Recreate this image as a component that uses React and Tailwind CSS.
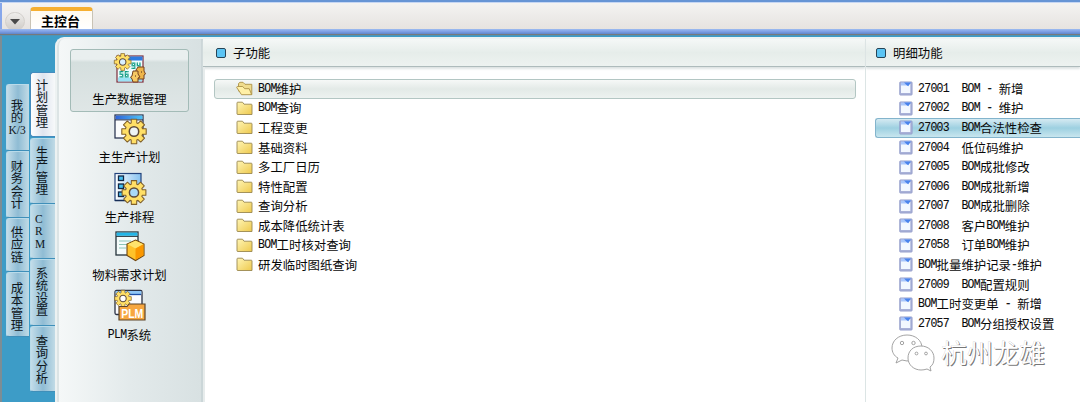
import React from "react";

const cjk = "font-['Noto_Sans_CJK_SC',sans-serif]";

function Label({ children }) {
  const parts = children.split(/([\x20-\x7e]+)/).filter(Boolean);
  return (
    <span className="flex items-center whitespace-pre text-[12.4px] leading-[18px] text-[#080808]">
      {parts.map((p, i) =>
        /^[\x20-\x7e]/.test(p) ? (
          <span key={i} className="inline-block scale-y-115 font-['Liberation_Mono',monospace] text-[11.5px] tracking-[-0.7px] [-webkit-text-stroke:0.1px_#222]">
            {p}
          </span>
        ) : (
          <span key={i}>{p}</span>
        )
      )}
    </span>
  );
}

const gearPoints = Array.from({ length: 8 }, (_, k) =>
  [[-0.32, 7.6], [-0.22, 10.6], [0.22, 10.6], [0.32, 7.6]].map(([d, r]) => {
    const a = (k * Math.PI) / 4 + d;
    return `${(r * Math.cos(a)).toFixed(2)},${(r * Math.sin(a)).toFixed(2)}`;
  }).join(" ")
).join(" ");

function Gear({ x, y, s = 1, hole = "#d8f0ff" }) {
  return (
    <g transform={`translate(${x} ${y}) scale(${s})`}>
      <polygon points={gearPoints} fill="#ffdf66" stroke="#80602a" strokeWidth=".9" strokeLinejoin="round" />
      <circle r="4" fill={hole} stroke="#5d4a3a" strokeWidth="1.3" />
    </g>
  );
}

function Pixels({ rows, x, y, u, fill }) {
  return (
    <g fill={fill}>
      {rows.map((r, j) => [...r].map((c, i) => c === "#" && <rect key={i + "-" + j} x={x + i * u} y={y + j * u} width={u} height={u} />))}
    </g>
  );
}

function ModuleIcon({ kind }) {
  return (
    <svg viewBox="0 0 34 32" className="h-8 w-[34px] shrink-0 overflow-visible">
      <defs>
        <linearGradient id="pane" x1="0" y1="0" x2="1" y2="0">
          <stop offset="0" stopColor="#fff" />
          <stop offset="1" stopColor="#86c2f0" />
        </linearGradient>
        <linearGradient id="title" x1="0" y1="0" x2="1" y2="0">
          <stop offset="0" stopColor="#2f63d8" />
          <stop offset="1" stopColor="#4cc4f8" />
        </linearGradient>
      </defs>
      {kind === "data" && (
        <g>
          <rect x="4" y="3" width="26" height="26" fill="#effdfd" stroke="#7d2e3c" strokeWidth="1.2" />
          <rect x="5" y="3.5" width="24.5" height="4" fill="#2e7be0" />
          <path d="M5 24.500h24v4H5z" fill="#9ce3f6" />
          <Pixels x={18.5} y={9.5} u={1.3} fill="#0a9a80" rows={["###.#.#", "#.#.#.#", "###.###", "..#...#", "###...#"]} />
          <Pixels x={6.5} y={18} u={1.3} fill="#0a9a80" rows={["###.###", "#...#..", "###.###", "..#.#.#", "###.###"]} />
          <Gear x={9.7} y={9} s={0.81} />
          <path d="M25 14h6v4l1.500 3-1.500 1v4h-6l-2-3v-6z" fill="#eeb54a" stroke="#73401f" />
          <path d="M20 18h5v3l2 3-2 1v4h-5l-1-3-1.500-2 1.500-1z" fill="#f6c862" stroke="#73401f" />
          <path d="M28 19h1M22 23h1" stroke="#4b2a18" />
        </g>
      )}
      {kind === "plan" && (
        <g>
          <rect x="2" y="2" width="28" height="23" fill="#fbfcfc" stroke="#202b48" strokeWidth="1.2" />
          <rect x="2.6" y="2.6" width="26.8" height="3.8" fill="url(#title)" />
          <path d="M2 6.900h28" stroke="#202b48" />
          <Gear x={21} y={18.5} s={1.18} hole="#eef4f6" />
        </g>
      )}
      {kind === "schedule" && (
        <g>
          <rect x="2" y="1.500" width="26" height="27" fill="url(#pane)" stroke="#23437c" strokeWidth="1.2" />
          {[4, 12, 20].map((y) => (
            <rect key={y} x="5.500" y={y} width="5" height="4.500" fill="#48c1f3" stroke="#122746" strokeWidth="1.3" />
          ))}
          <path d="M2 28.500h27" stroke="#182f57" strokeWidth="1.4" />
          <Gear x={21} y={20.500} s={1.15} hole="#a9d9f7" />
        </g>
      )}
      {kind === "material" && (
        <g>
          <rect x="3" y="2" width="22" height="23" fill="#f4fbfa" stroke="#26343c" strokeWidth="1.3" />
          <rect x="3.600" y="2.600" width="20.800" height="3.200" fill="#22b6e8" />
          <path d="M3 6.400h22" stroke="#26343c" />
          <path d="M6 11h12M6 14.500h8M6 18h7" stroke="#8cc5b7" strokeWidth="1.2" />
          <path d="M22.500 10l8.500 4v11.500l-8.500 5-8.500-5V14z" fill="#ffc22a" stroke="#714710" strokeWidth="1.1" />
          <path d="M22.500 10.700l7.800 3.500-7.800 4.300-7.800-4.300z" fill="#ffe46c" />
          <path d="M22.500 18.500l7.900-4.200v11l-7.900 4.500z" fill="#fb9700" />
        </g>
      )}
      {kind === "plm" && (
        <g>
          <rect x="2" y="1.500" width="27" height="24" rx="1.500" fill="#fbfcff" stroke="#2a3144" strokeWidth="1.3" />
          <rect x="2.600" y="2" width="25.800" height="3" fill="#8fc6f6" />
          <path d="M3 5.500h25" stroke="#1b4fa8" strokeWidth="1.3" />
          <Gear x={10} y={9.500} s={0.8} hole="#fff" />
          <path d="M6 17.500v13.500h26V15H16l-2 2.500z" fill="#f7a740" stroke="#5d4529" strokeWidth="1.2" />
          <text x="19.200" y="28.500" textAnchor="middle" textLength="22" lengthAdjust="spacingAndGlyphs" className="fill-white font-['Liberation_Sans',sans-serif] text-[12px] font-bold">PLM</text>
        </g>
      )}
    </svg>
  );
}

function FolderIcon({ open }) {
  return (
    <svg viewBox="0 0 17 15" className="h-[15px] w-[17px] shrink-0">
      <defs>
        <linearGradient id="folder" x1="0" y1="0" x2="1" y2="1">
          <stop offset="0" stopColor="#fff5b5" />
          <stop offset="1" stopColor="#eec94d" />
        </linearGradient>
      </defs>
      {open ? (
        <g stroke="#ac9146" strokeWidth=".9" strokeLinejoin="round">
          <path d="M2.500 10V2.500l1.500-1.200h3l2 2h6.800V13.500z" fill="#f0dc8d" />
          <path d="M.7 6.500q0-1 1-1h5l2 2.200h4.500l2.500 6H5.500z" fill="#fff0a6" />
        </g>
      ) : (
        <path d="M1 13V2q0-.8.8-.8h4.700l1.500 2h7.300q.7 0 .7.800V13.500H2q-1 0-1-.5z" fill="url(#folder)" stroke="#9a8850" strokeWidth=".9" />
      )}
    </svg>
  );
}

function DocIcon() {
  return (
    <svg viewBox="0 0 14 15" className="h-[15px] w-[14px] shrink-0">
      <rect x=".7" y=".9" width="12.400" height="13.200" rx=".8" fill="#a9b1d8" stroke="#8f99c8" strokeWidth=".8" />
      <path d="M2 3h9.300v9H2z" fill="#f3f8ff" />
      <path d="M2 1.500h10L9 4.500H2z" fill="#a9c6fb" />
      <path d="M5 1.500H12L9.200 5.300 7.500 4z" fill="#4a83ec" />
    </svg>
  );
}

function SideTab({ text, className, active }) {
  return (
    <div
      className={
        "flex shrink-0 flex-col items-center rounded-l-[3px] border border-r-0 text-[12.4px] leading-[12.4px] text-[#10171c] " +
        (active
          ? "border-[#468bbe] bg-linear-to-r from-white via-[#dfe4ef] to-[#f7f9fa] "
          : "border-[#b9dbea] border-b-[#3f8fb9] bg-linear-to-r from-[#c3dde9] via-[#8fbcd4] to-[#c1dbe6] ") +
        className
      }
    >
      {text.map((t, i) => (
        <span key={i} className={/[A-Z]/.test(t) ? "font-['Liberation_Serif',serif] text-[11.5px] whitespace-nowrap" : "whitespace-nowrap"}>{t}</span>
      ))}
    </div>
  );
}

const modules = [
  ["data", "生产数据管理", "mt-[6px]"],
  ["plan", "主生产计划", "mt-[3px]"],
  ["schedule", "生产排程", "mt-[4px]"],
  ["material", "物料需求计划", "mt-[4px]"],
  ["plm", "PLM系统", "mt-[5px]"],
];

const folders = ["BOM维护", "BOM查询", "工程变更", "基础资料", "多工厂日历", "特性配置", "查询分析", "成本降低统计表", "BOM工时核对查询", "研发临时图纸查询"];

const details = [
  "27001  BOM - 新增", "27002  BOM - 维护", "27003  BOM合法性检查", "27004  低位码维护", "27005  BOM成批修改",
  "27006  BOM成批新增", "27007  BOM成批删除", "27008  客户BOM维护", "27058  订单BOM维护", "BOM批量维护记录-维护",
  "27009  BOM配置规则", "BOM工时变更单 - 新增", "27057  BOM分组授权设置",
];

function SectionHeader({ title, className }) {
  return (
    <div className={"flex h-[28px] shrink-0 items-center border-b border-[#aebbbc] bg-linear-to-b from-[#f5f8f7] via-[#e6edea] to-[#edf2f0] pt-px shadow-[0_2px_2px_#dde3e3] " + className}>
      <span className="mr-[7px] h-[10px] w-[10px] rounded-[2px] border-[1.5px] border-[#274557] bg-[#5cc5f4]" />
      <Label>{title}</Label>
    </div>
  );
}

export default function App() {
  return (
    <div className={"flex h-[402px] w-[1080px] flex-col overflow-hidden bg-[#3d9cc7] " + cjk}>
      <div className="h-[3px] shrink-0 border-b border-[#c6d6f3] bg-[#6694d5]" />
      <div className="flex h-[26px] shrink-0 border-l-2 border-[#86a7eb] bg-linear-to-b from-[#f4f3f2] to-[#e6e3e0]">
        <div className="mt-[9px] ml-[3px] flex h-[19px] w-[20px] items-center justify-center rounded-full border border-[#d3d0cc] bg-linear-to-b from-[#efeeec] to-[#cfccc8]">
          <svg viewBox="0 0 10 6" className="h-[6px] w-[10px]"><path d="M0 0h10L5 5.500z" fill="#494949" /></svg>
        </div>
        <div className="mt-1 ml-[5px] flex h-[22px] w-[63px] items-center justify-center rounded-t-[4px] border border-t-[4px] border-b-0 border-[#c9c3b5] border-t-[#f6af31] bg-linear-to-b from-[#fffaf0] to-white pr-[2px] text-[13px] font-bold text-black">
          <span className="leading-[17px]">主控台</span>
        </div>
      </div>
      <div className="h-[5px] shrink-0 bg-linear-to-b from-[#9dbcf0] via-[#7f9fe4] to-[#5f86cb]" />
      <div className="h-[2px] shrink-0 border-b border-[#4c94b8] bg-[#77797b]" />
      <div className="flex min-h-0 flex-1 border-l-2 border-[#7c8d95]">
        <div className="ml-1 flex w-[23px] flex-col pt-12">
          <SideTab text={["我", "的", "K/3"]} className="h-[67px] pt-[14px] pr-[2px]" />
          <SideTab text={[..."财务会计"]} className="h-[67px] pt-[8px] pr-[2px]" />
          <SideTab text={[..."供应链"]} className="h-[54px] pt-[7px] pr-[2px]" />
          <SideTab text={[..."成本管理"]} className="h-[65px] pt-[9px] pr-[2px]" />
        </div>
        <div className="ml-px flex w-[25px] flex-col pt-9">
          <SideTab active text={[..."计划管理"]} className="h-[65px] pt-[6px] pr-[2px]" />
          <SideTab text={[..."生产管理"]} className="mt-px h-[66px] pt-[7px] pr-[2px]" />
          <SideTab text={[..."CRM"]} className="h-[55px] items-start! pt-[8px] pl-[4px]" />
          <SideTab text={[..."系统设置"]} className="h-[67px] pt-[7px] pr-[2px]" />
          <SideTab text={[..."查询分析"]} className="h-[66px] pt-[8px] pr-[2px]" />
        </div>
        <div className="mt-px flex min-w-0 flex-1 rounded-tl-[9px] border-t-2 border-l-2 border-[#edf2f2] bg-white">
          <div className="flex w-[144px] shrink-0 flex-col items-center rounded-tl-[7px] border-l-2 border-[#dce4e5] bg-linear-to-r from-[#f5f8f8] via-[#e3eaeb] to-[#d8e1e2] pt-[10px] pr-px">
            {modules.map(([kind, name, gap], i) => (
              <div
                key={kind}
                className={
                  "flex w-[119px] shrink-0 flex-col items-center " +
                  (i === 0
                    ? "mb-px h-[63px] rounded-[3px] border border-[#a3bbb7] bg-linear-to-b from-[#e9efef] from-15% via-[#d5dfde] via-20% to-[#dfe6e6] pt-[3px]"
                    : "h-[58.5px]")
                }
              >
                <ModuleIcon kind={kind} />
                <div className={i === 0 ? "mt-[5px]" : gap}><Label>{name}</Label></div>
              </div>
            ))}
          </div>
          <div className="flex w-[664px] shrink-0 flex-col border-l-2 border-[#cbd6d8]">
            <SectionHeader title="子功能" className="pl-[13px]" />
            <div className="flex flex-1 flex-col border-l-2 border-[#e7ecec] pt-[12px] pl-[9px]">
              {folders.map((f, i) => (
                <div key={f} className={"flex h-[19.58px] w-[642px] shrink-0 items-center gap-[5px] pl-[21px] " + (i === 0 ? "rounded-[3px] border border-[#b3c6c3] bg-linear-to-b from-[#f6f8f7] via-[#e3eae7] to-[#edf2f0]" : "border border-transparent")}>
                  <FolderIcon open={i === 0} />
                  <Label>{f}</Label>
                </div>
              ))}
            </div>
          </div>
          <div className="flex min-w-0 flex-1 flex-col border-l border-[#dce5e5]">
            <SectionHeader title="明细功能" className="pl-[10px]" />
            <div className="flex flex-col pt-[12px] pl-[9px]">
              {details.map((d, i) => (
                <div key={d} className={"flex h-[19.58px] items-center gap-[5px] rounded-l-[3px] border border-r-0 pl-[23px] " + (i === 2 ? "border-[#83b4cc] bg-linear-to-b from-[#d5eaf2] via-[#9dd0e1] to-[#c8e6ee]" : "border-transparent")}>
                  <DocIcon />
                  <Label>{d}</Label>
                </div>
              ))}
            </div>
            <div className="ml-[25px] flex items-center gap-[6px]">
              <svg viewBox="0 0 44 38" className="h-[38px] w-[44px]" fill="#fff" stroke="#999" strokeWidth=".9">
                <path d="M16 1C7 1 1 7 1 14c0 4 2 8 6 10l-2 5 6-3q5 2 10 0C27 25 31 20 31 14 31 6 24 1 16 1z" />
                <circle cx="11" cy="9" r="1.700" /><circle cx="22.500" cy="9" r="1.700" />
                <path d="M30 12c-8 0-13 5-13 12s6 12 13 12q3 0 6-1l4 2-1-4c3-2 4-5 4-9 0-7-6-12-13-12z" />
                <circle cx="25.500" cy="19.500" r="1.400" /><circle cx="35" cy="19.500" r="1.400" />
              </svg>
              <span className="-mt-[2px] text-[26px] leading-[36px] whitespace-nowrap text-white [text-shadow:1px_1px_0_#777,0_-0.5px_0_#aaa]">杭州龙雄</span>
            </div>
          </div>
        </div>
      </div>
    </div>
  );
}
